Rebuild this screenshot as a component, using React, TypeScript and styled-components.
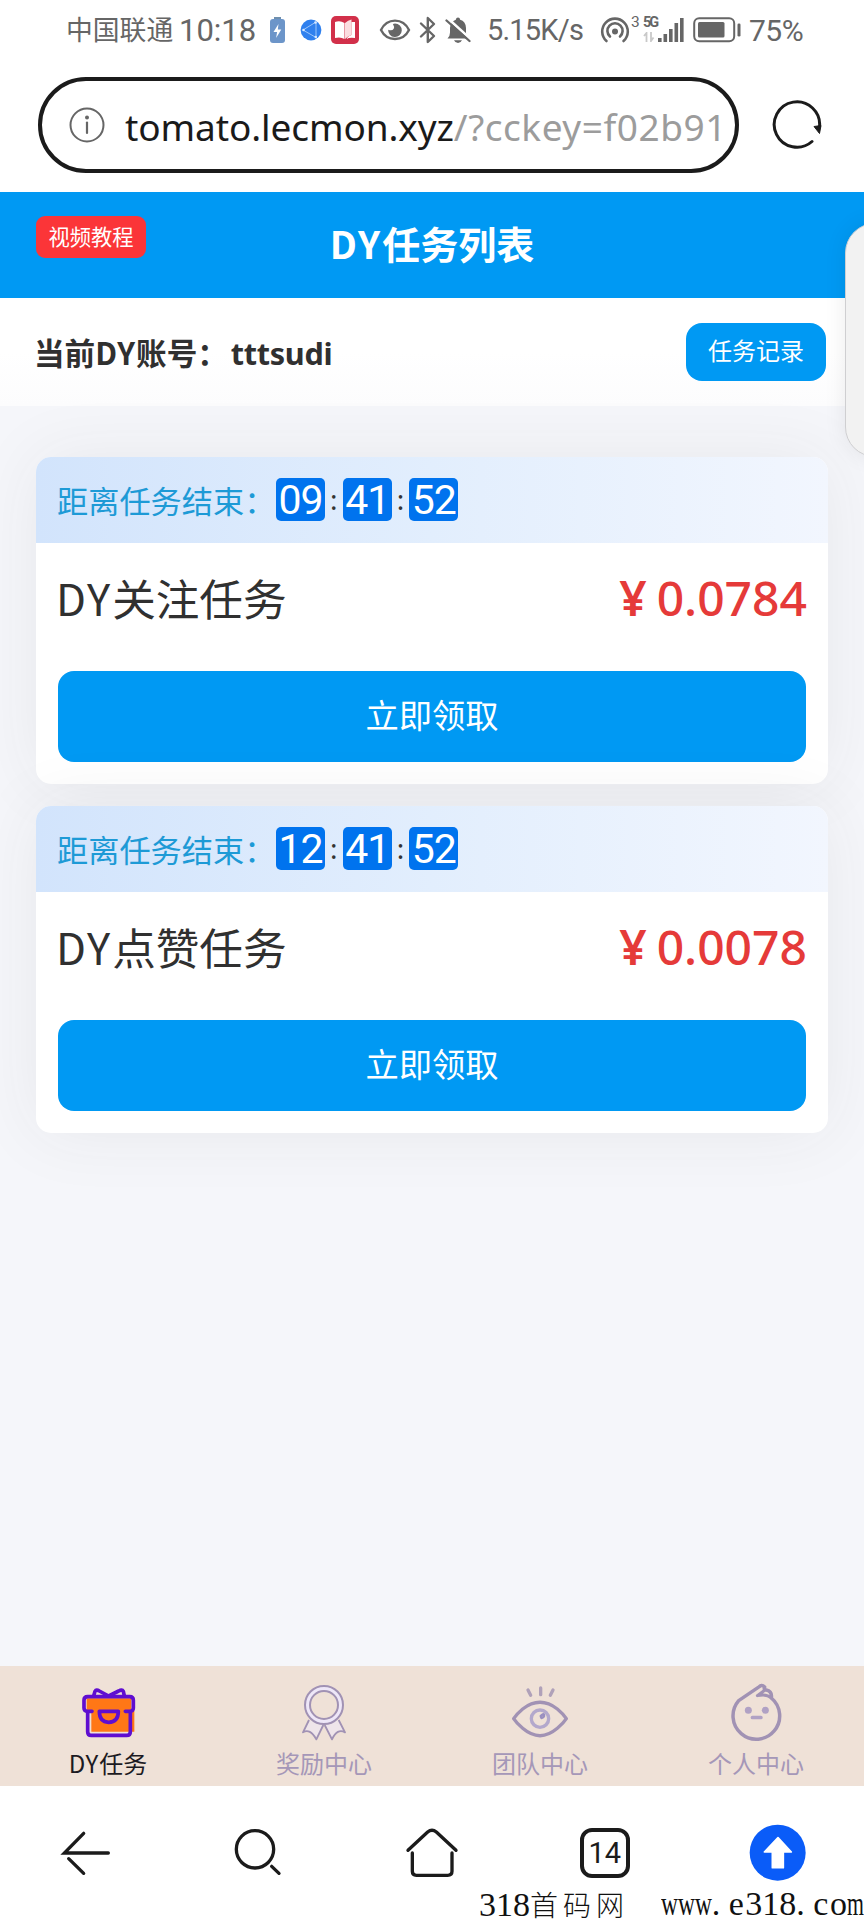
import React from "react";
import styled, { createGlobalStyle } from "styled-components";

const GlobalStyle = createGlobalStyle`
  * { box-sizing: border-box; }
  body {
    margin: 0;
    background: #ffffff;
    font-family: "Noto Sans", "Noto Sans CJK SC", sans-serif;
  }
  button { font: inherit; border: 0; padding: 0; }
  svg { display: block; flex: none; }
`;

const cjk = `"Noto Sans CJK SC", "Noto Sans", sans-serif`;

const Screen = styled.div`
  position: relative;
  width: 864px;
  height: 1920px;
  display: flex;
  flex-direction: column;
  overflow: hidden;
  background: #ffffff;
`;

/* ---------- system status bar ---------- */

const StatusBar = styled.div`
  height: 77px;
  flex: none;
  display: flex;
  align-items: center;
  padding: 0 0 17px 66px;
  color: #666666;
`;

const StatusItem = styled.div<{ $w: number; $gap?: number }>`
  width: ${(p) => p.$w}px;
  margin-left: ${(p) => p.$gap ?? 0}px;
  flex: none;
`;

const StatusText = styled(StatusItem)<{ $size: number; $spacing?: number }>`
  font-family: Roboto, sans-serif;
  font-size: ${(p) => p.$size}px;
  letter-spacing: ${(p) => p.$spacing ?? 0}px;
  line-height: 37px;
  white-space: nowrap;
`;

const Carrier = styled(StatusText)`
  font-family: ${cjk};
  line-height: 34px;
  padding-bottom: 2px;
`;

const HotspotCount = styled(StatusText)`
  line-height: 14px;
  padding-bottom: 16px;
`;

const Network = styled(StatusItem)`
  display: flex;
  flex-direction: column;
  gap: 3px;
  padding-bottom: 1px;
`;

const NetworkLabel = styled.span`
  font: 700 14.5px/12px "Roboto", sans-serif;
  letter-spacing: -2px;
`;

/* ---------- address bar ---------- */

const AddressBar = styled.div`
  height: 115px;
  flex: none;
  display: flex;
  align-items: flex-start;
  padding-left: 38px;
  gap: 32px;
`;

const AddressField = styled.div`
  width: 701px;
  height: 96px;
  border: 4px solid #1b1b1b;
  border-radius: 48px;
  display: flex;
  align-items: center;
  padding-left: 27px;
  gap: 20px;
`;

const Url = styled.div`
  font-size: 37px;
  line-height: 50px;
  letter-spacing: -0.1px;
  padding-top: 3px;
  color: #1a1a1a;
  white-space: nowrap;
`;

const UrlQuery = styled.span`
  color: #9c9c9c;
  letter-spacing: 0.55px;
`;

const ReloadButton = styled.button`
  background: none;
  margin-top: 22px;
`;

/* ---------- page ---------- */

const Header = styled.header`
  height: 106px;
  flex: none;
  display: grid;
  grid-template-columns: 1fr auto 1fr;
  background: #0099f3;
  color: #ffffff;
  padding: 0 36px;
`;

const TutorialTag = styled.button`
  justify-self: start;
  width: 110px;
  height: 42px;
  margin-top: 24px;
  border-radius: 9px;
  background: #fb3538;
  color: #ffffff;
  font: 400 21.3px/38px ${cjk};
  padding-bottom: 2px;
`;

const Title = styled.h1`
  margin: 0;
  font: 700 38px/101px ${cjk};
`;

const Latin = styled.span<{ $spacing: number }>`
  letter-spacing: ${(p) => p.$spacing}px;
`;

const AccountRow = styled.div`
  height: 108px;
  flex: none;
  display: flex;
  justify-content: space-between;
  align-items: flex-start;
  padding: 25px 38px 0 34px;
  background: linear-gradient(#ffffff 50%, #fcfcfd);
`;

const Account = styled.div`
  font: 700 30.6px/58px ${cjk};
  color: #303030;
  white-space: nowrap;
`;

const AccountName = styled.span`
  font-family: "Noto Sans", sans-serif;
  letter-spacing: -0.3px;
  margin-left: 3px;
`;

const RecordsButton = styled.button`
  width: 140px;
  height: 58px;
  border-radius: 16px;
  background: #0099f3;
  color: #ffffff;
  font: 400 24px/52px ${cjk};
  padding-bottom: 4px;
`;

const TaskList = styled.main`
  flex: 1;
  display: flex;
  flex-direction: column;
  gap: 22px;
  padding: 51px 36px 0;
  background: #f5f6fa;
`;

const Card = styled.section`
  height: 327px;
  border-radius: 15px;
  overflow: hidden;
  background: #ffffff;
  box-shadow: 0 0 70px rgba(60, 60, 60, 0.07);
`;

const Countdown = styled.div`
  height: 86px;
  display: flex;
  align-items: center;
  padding: 0 0 1px 21px;
  background: linear-gradient(90deg, #d2e4fc, #e2eefd 50%, #f2f6fe);
`;

const CountdownLabel = styled.span`
  width: 219px;
  font: 400 31.2px/44px ${cjk};
  color: #1d9ad6;
  white-space: nowrap;
  padding-top: 1px;
`;

const Digits = styled.span`
  width: 49px;
  height: 43px;
  border-radius: 5px;
  background: #0073ee;
  color: #ffffff;
  font: 400 41px/45px Roboto, sans-serif;
  letter-spacing: -1px;
  text-align: center;
`;

const Colon = styled.span`
  width: 17.7px;
  text-align: center;
  font-size: 28px;
  line-height: 38px;
  padding-bottom: 2px;
  color: #333333;
`;

const TaskSummary = styled.div`
  display: flex;
  align-items: center;
  justify-content: space-between;
  height: 128px;
  padding: 0 21px 18px 20px;
`;

const TaskName = styled.h2`
  margin: 0;
  padding-bottom: 2px;
  font: 400 43.6px/60px ${cjk};
  color: #303030;
`;

const Price = styled.div`
  display: flex;
  align-items: baseline;
  gap: 10px;
  font-size: 48px;
  font-weight: 500;
  line-height: 60px;
  color: #e53a39;
`;

const Currency = styled.span`
  font-weight: 600;
`;

const ClaimButton = styled.button`
  display: block;
  width: 748px;
  height: 91px;
  margin: 0 auto;
  border-radius: 16px;
  background: #0099f3;
  color: #ffffff;
  font: 400 33.3px/85px ${cjk};
  padding-bottom: 6px;
`;

const SideHandle = styled.div`
  position: absolute;
  left: 845px;
  top: 223px;
  width: 60px;
  height: 234px;
  border-radius: 30px;
  border: 1px solid #cfcfd1;
  background: #f2f2f2;
  box-shadow: 0 0 22px rgba(0, 0, 0, 0.08);
`;

/* ---------- tabs ---------- */

const TabBar = styled.nav`
  height: 120px;
  flex: none;
  display: grid;
  grid-template-columns: repeat(4, 1fr);
  background: #efe1d7;
`;

const Tab = styled.div<{ $active?: boolean }>`
  display: flex;
  flex-direction: column;
  align-items: center;
  padding-top: 16px;
  font: 400 24px/40px ${cjk};
  color: ${(p) => (p.$active ? "#1c1a22" : "#a597b8")};
`;

const TabLabel = styled.span`
  margin-top: 1px;
`;

/* ---------- browser toolbar ---------- */

const BrowserBar = styled.footer`
  height: 134px;
  flex: none;
  display: grid;
  grid-template-columns: repeat(5, 1fr);
  place-items: center;
  background: #ffffff;
`;

const PageCount = styled.div`
  width: 50px;
  height: 50px;
  border: 4px solid #1b1b1b;
  border-radius: 12px;
  font: 400 29px/43px Roboto, sans-serif;
  text-align: center;
  color: #1b1b1b;
`;

const Watermark = styled.div`
  position: absolute;
  left: 479px;
  right: 0;
  bottom: 0;
  display: flex;
  justify-content: space-between;
  font: 400 34px/30px "Liberation Serif", "Noto Sans CJK SC", serif;
  color: #111111;
  white-space: nowrap;
`;

const WatermarkCjk = styled.span`
  font: 300 28px/30px ${cjk};
  letter-spacing: 5px;
`;

const Narrow = styled.span<{ $scale: number; $trim: number }>`
  display: inline-block;
  transform: scaleX(${(p) => p.$scale});
  transform-origin: left;
  margin-right: ${(p) => -p.$trim}px;
`;

const Spread = styled.span`
  letter-spacing: 8.5px;
`;

const Loose = styled.span`
  letter-spacing: 1.6px;
`;

/* ---------- icons ---------- */

const ChargeIcon = () => (
  <svg width="17" height="28" viewBox="0 0 17 28">
    <rect x="5" y="1" width="7" height="4" fill="#6f8fae" />
    <rect x="1" y="3" width="15" height="24" rx="3" fill="#6c95c9" />
    <path d="M9.5 8 4.5 16h3.6l-1 6 5.2-8.4H8.800z" fill="#fff" />
  </svg>
);

const GlobeIcon = () => (
  <svg width="22" height="22" viewBox="0 0 22 22">
    <circle cx="11" cy="11" r="10.400" fill="#2f80ee" />
    <path d="M16 3 3 11l13 7.500M16 3v15.500" fill="none" stroke="#9cc6fb" strokeWidth="1" />
    <g fill="#d7e8ff">
      <circle cx="15.500" cy="3.500" r="1.300" />
      <circle cx="3.500" cy="11" r="1.300" />
      <circle cx="15.800" cy="18" r="1.300" />
    </g>
  </svg>
);

const BookIcon = () => (
  <svg width="30" height="30" viewBox="0 0 30 30">
    <rect x="1" y="1" width="28" height="28" rx="5" fill="#d2304a" />
    <path d="M5 7q5-2 9.500 1v16q-4-2.500-9.500-1z" fill="#fff" />
    <path d="M15 8q3-3 6.500-3.500v15.500q-3.500 1-6.500 4z" fill="#fbdde0" />
    <path d="M21.500 7H25v16q-5-1-9 1 3-3.500 5.500-4z" fill="#fff" />
  </svg>
);

const WatchIcon = () => (
  <svg width="32" height="24" viewBox="0 0 32 24">
    <path d="M2 12C8 -0.500 24 -0.500 30 12 24 24 8 24 2 12z" fill="none" stroke="#666" strokeWidth="2.400" />
    <path d="M16 5.500a6.800 6.800 0 1 1-6.800 6.200q4 1.500 5.500-1 1-2-.800-4.800z" fill="#666" />
  </svg>
);

const BluetoothIcon = () => (
  <svg width="18" height="28" viewBox="0 0 18 28">
    <path d="M2 7.500 15 20 8.800 26V2l6.200 6L2 20.500" fill="none" stroke="#666" strokeWidth="2.400" strokeLinejoin="round" strokeLinecap="round" />
  </svg>
);

const MutedIcon = () => (
  <svg width="27" height="28" viewBox="0 0 27 28">
    <path d="M2.500 22.500Q5 20.500 5 16.500V12Q5.500 5.500 10.800 3.800q.3-2.300 2.200-2.300t2.200 2.300q5.400 1.400 5.800 8.200v4.500q0 4 3 6z" fill="#666" />
    <path d="M9 24.300h8q-1.200 2.700-4 2.700t-4-2.700z" fill="#666" />
    <path d="m3 2.500 23 21" stroke="#fff" strokeWidth="2.600" />
    <path d="m1.500 4.500 23 20.500" stroke="#666" strokeWidth="2.300" strokeLinecap="round" />
  </svg>
);

const HotspotIcon = () => (
  <svg width="31" height="28" viewBox="0 0 31 28">
    <g fill="none" stroke="#666" strokeWidth="2.600" strokeLinecap="round">
      <path d="M6.500 25a12.800 12.800 0 1 1 17 0" />
      <path d="M10 20.500a7.600 7.600 0 1 1 10 0" />
    </g>
    <circle cx="15" cy="15.500" r="3" fill="#666" />
  </svg>
);

const DataArrows = () => (
  <svg width="12" height="10" viewBox="0 0 12 10">
    <path d="M3.500 10V1L1 4M8 0v9l2.500-3.500" fill="none" stroke="#c9c9c9" strokeWidth="1.800" />
  </svg>
);

const SignalIcon = () => (
  <svg width="27" height="26" viewBox="0 0 27 26" fill="#666">
    <rect x="1" y="21" width="3.600" height="4" />
    <rect x="6.500" y="17" width="3.600" height="8" />
    <rect x="12" y="12" width="3.600" height="13" />
    <rect x="17.500" y="6" width="3.600" height="19" />
    <rect x="23" y="1" width="3.600" height="24" />
  </svg>
);

const BatteryIcon = () => (
  <svg width="49" height="26" viewBox="0 0 49 26">
    <rect x="1.200" y="1.200" width="40" height="23" rx="5" fill="none" stroke="#666" strokeWidth="2" />
    <rect x="5" y="5" width="26.500" height="15.500" rx="1.500" fill="#666" />
    <rect x="44.500" y="6.500" width="3" height="13" rx="1.300" fill="#666" />
  </svg>
);

const InfoIcon = () => (
  <svg width="36" height="36" viewBox="0 0 36 36">
    <circle cx="18" cy="18" r="16.500" fill="none" stroke="#666" strokeWidth="2" />
    <circle cx="18" cy="10.500" r="2" fill="#666" />
    <path d="M18 15.500V26" stroke="#666" strokeWidth="2.200" strokeLinecap="round" />
  </svg>
);

const ReloadIcon = () => (
  <svg width="52" height="52" viewBox="0 0 52 52">
    <path d="M41 42.500A22.700 22.700 0 1 1 48.500 28" fill="none" stroke="#1b1b1b" strokeWidth="3" strokeLinecap="round" />
    <path d="M43 27.500 50 26.500 48.500 34.500z" fill="#1b1b1b" stroke="#1b1b1b" strokeWidth="1" strokeLinejoin="round" />
  </svg>
);

const GiftIcon = () => (
  <svg width="60" height="60" viewBox="234 96 180 180" strokeLinecap="round" strokeLinejoin="round">
    <path d="M260 145H394V183H403V245H274V183H260z" fill="#ff7716" />
    <g fill="none" stroke="#5f0ed0" strokeWidth="11">
      <path d="M276 184H263Q252 184 252 174V151Q252 140 263 140H389Q400 140 400 151V174Q400 184 389 184H376" />
      <path d="M263 186V245Q263 256 274 256H380Q391 256 391 245V186" />
      <path d="M281 138 285 124Q289 117 298 123L326 138 356 123Q366 117 370 124L373 138" />
      <path d="M298 184H355Q355 217 326 217 298 216 298 184z" />
    </g>
  </svg>
);

const MedalIcon = () => (
  <svg width="60" height="60" viewBox="882 96 180 180" fill="none" stroke="#a192b4" strokeLinejoin="round">
    <circle cx="972" cy="165" r="50" stroke="#eee7f8" strokeWidth="13" />
    <path d="M927 210 909 247Q930 234 949 268L970 225M1016 210 1035 247Q1012 234 996 268L974 225" strokeWidth="5.500" fill="#efe5ea" />
    <circle cx="972" cy="165" r="57" strokeWidth="6" />
    <circle cx="972" cy="165" r="42" strokeWidth="6" />
  </svg>
);

const EyeIcon = () => (
  <svg width="60" height="60" viewBox="234 96 180 180" fill="none" stroke="#a192b4" strokeLinecap="round" strokeLinejoin="round">
    <path d="M245 206Q254 192 272 177 324 137 376 177 394 192 403 206 394 220 376 235 324 279 272 235 254 220 245 206z" strokeWidth="10" />
    <circle cx="324" cy="206" r="26" stroke="#b3a8cc" strokeWidth="10" />
    <path d="M326 198q8-8 10-4 2 8-8 10z" stroke="#9a8fc0" strokeWidth="7" />
    <path d="m288 120 8 16M326 114v20M363 120l-8 16" stroke="#b0a1b9" strokeWidth="10" />
  </svg>
);

const BabyIcon = () => (
  <svg width="60" height="60" viewBox="882 96 180 180" fill="none" stroke="#a192b4" strokeLinecap="round" strokeLinejoin="round">
    <path d="M982 110Q988 102 998 111 994 120 1003 120 1021 124 1018 144A70 70 0 1 1 920 152Z" strokeWidth="10.500" />
    <path d="M1018 144Q1004 130 976 137L998 121" strokeWidth="9" />
    <g fill="#b0a1c4" stroke="none">
      <circle cx="949" cy="181" r="10.500" />
      <circle cx="1000" cy="181" r="10.500" />
      <rect x="956" y="197" width="36" height="11" rx="5" />
    </g>
  </svg>
);

const BackIcon = () => (
  <svg width="60" height="60" viewBox="169 520 180 180" fill="none" stroke="#1b1b1b" strokeWidth="10" strokeLinecap="round">
    <path d="M326 610H194L252 551M207 627 252 671" />
  </svg>
);

const SearchIcon = () => (
  <svg width="60" height="60" viewBox="688 520 180 180" fill="none" stroke="#1b1b1b" strokeWidth="10" strokeLinecap="round">
    <circle cx="766" cy="599" r="56" />
    <path d="m816 650 22 21" />
  </svg>
);

const HomeIcon = () => (
  <svg width="60" height="60" viewBox="1206 520 180 180" fill="none" stroke="#1b1b1b" strokeWidth="10" strokeLinecap="round" strokeLinejoin="round">
    <path d="M1224 602 1283 547Q1296 536 1309 547L1368 602" />
    <path d="M1237 610V665Q1237 677 1249 677H1343Q1356 677 1356 665V610" />
  </svg>
);

const TopIcon = () => (
  <svg width="60" height="60" viewBox="947 520 180 180">
    <circle cx="1036" cy="609" r="84" fill="#0a5cf8" />
    <path d="M1037 564 1077 607H1053V654H1020V607H996z" fill="#fff" stroke="#fff" strokeWidth="5" strokeLinejoin="round" />
  </svg>
);

/* ---------- content ---------- */

const tasks = [
  { name: "关注任务", price: "0.0784", left: ["09", "41", "52"] },
  { name: "点赞任务", price: "0.0078", left: ["12", "41", "52"] },
];

const tabs = [
  { prefix: "DY", label: "任务", icon: <GiftIcon />, active: true },
  { label: "奖励中心", icon: <MedalIcon /> },
  { label: "团队中心", icon: <EyeIcon /> },
  { label: "个人中心", icon: <BabyIcon /> },
];

export default function App() {
  return (
    <Screen>
      <GlobalStyle />
      <StatusBar>
        <Carrier $w={113} $size={26.8}>中国联通</Carrier>
        <StatusText $w={80} $size={31}>10:18</StatusText>
        <StatusItem $w={17} $gap={10}><ChargeIcon /></StatusItem>
        <StatusItem $w={22} $gap={14}><GlobeIcon /></StatusItem>
        <StatusItem $w={30} $gap={8}><BookIcon /></StatusItem>
        <StatusItem $w={32} $gap={19}><WatchIcon /></StatusItem>
        <StatusItem $w={18} $gap={8}><BluetoothIcon /></StatusItem>
        <StatusItem $w={27} $gap={8}><MutedIcon /></StatusItem>
        <StatusText $w={97} $gap={15} $size={29} $spacing={-0.8}>5.15K/s</StatusText>
        <StatusItem $w={31} $gap={16}><HotspotIcon /></StatusItem>
        <HotspotCount $w={12} $size={15.5}>3</HotspotCount>
        <Network $w={14}>
          <NetworkLabel>5G</NetworkLabel>
          <DataArrows />
        </Network>
        <StatusItem $w={27}><SignalIcon /></StatusItem>
        <StatusItem $w={49} $gap={9}><BatteryIcon /></StatusItem>
        <StatusText $w={56} $gap={7} $size={30} $spacing={-0.5}>75%</StatusText>
      </StatusBar>

      <AddressBar>
        <AddressField>
          <InfoIcon />
          <Url>
            tomato.lecmon.xyz<UrlQuery>/?cckey=f02b91</UrlQuery>
          </Url>
        </AddressField>
        <ReloadButton aria-label="reload">
          <ReloadIcon />
        </ReloadButton>
      </AddressBar>

      <Header>
        <TutorialTag>视频教程</TutorialTag>
        <Title>
          <Latin $spacing={2}>DY</Latin>任务列表
        </Title>
      </Header>
      <AccountRow>
        <Account>
          当前<Latin $spacing={1}>DY</Latin>账号：<AccountName>tttsudi</AccountName>
        </Account>
        <RecordsButton>任务记录</RecordsButton>
      </AccountRow>

      <TaskList>
        {tasks.map((task) => (
          <Card key={task.name}>
            <Countdown>
              <CountdownLabel>距离任务结束：</CountdownLabel>
              {task.left.map((part, i) => (
                <React.Fragment key={i}>
                  {i > 0 && <Colon>:</Colon>}
                  <Digits>{part}</Digits>
                </React.Fragment>
              ))}
            </Countdown>
            <TaskSummary>
              <TaskName>
                <Latin $spacing={2}>DY</Latin>{task.name}
              </TaskName>
              <Price>
                <Currency>¥</Currency>
                <span>{task.price}</span>
              </Price>
            </TaskSummary>
            <ClaimButton>立即领取</ClaimButton>
          </Card>
        ))}
      </TaskList>

      <TabBar>
        {tabs.map((tab) => (
          <Tab key={tab.label} $active={tab.active}>
            {tab.icon}
            <TabLabel>
              {tab.prefix && <Latin $spacing={1}>{tab.prefix}</Latin>}
              {tab.label}
            </TabLabel>
          </Tab>
        ))}
      </TabBar>

      <BrowserBar>
        <BackIcon />
        <SearchIcon />
        <HomeIcon />
        <PageCount>14</PageCount>
        <TopIcon />
      </BrowserBar>

      <SideHandle />
      <Watermark>
        <span>
          318<WatermarkCjk>首码网</WatermarkCjk>
        </span>
        <span>
          <Narrow $scale={0.69} $trim={22.6}>www</Narrow>
          <Spread>.</Spread>
          <Loose>e</Loose>318<Spread>.</Spread>
          <Loose>c</Loose>o<Narrow $scale={0.64} $trim={9.5}>m</Narrow>
        </span>
      </Watermark>
    </Screen>
  );
}
